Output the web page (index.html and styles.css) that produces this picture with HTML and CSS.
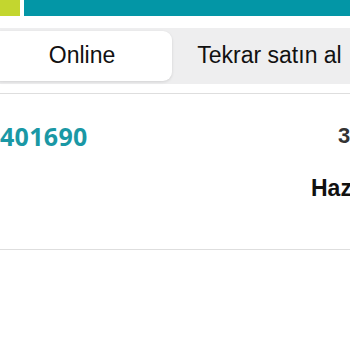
FILE: index.html
```html
<!DOCTYPE html>
<html lang="tr">
<head>
<meta charset="utf-8">
<link rel="stylesheet" href="styles.css">
</head>
<body>
<div class="topbar">
  <div class="lime"></div>
  <div class="teal"></div>
</div>
<div class="tabs">
  <div class="tab tab-active">Online</div>
  <div class="tab">Tekrar satın al</div>
</div>
<div class="divider divider-top"></div>
<div class="order">
  <div class="order-no">401690</div>
  <div class="qty">3 ürün</div>
  <div class="status">Hazırlanıyor</div>
</div>
<div class="divider"></div>
</body>
</html>
```
FILE: styles.css
```css
html, body {
  margin: 0;
  padding: 0;
  background: #ffffff;
  overflow: hidden;
  width: 350px;
  height: 350px;
}
body {
  font-family: "Liberation Sans", Arial, sans-serif;
}
.topbar {
  display: flex;
  height: 16px;
  gap: 4px;
}
.lime {
  width: 20px;
  background: #c3d62f;
}
.teal {
  flex: 1;
  background: #0396a6;
}
.tabs {
  margin-top: 12px;
  margin-left: -8px;
  width: 380px;
  height: 56px;
  box-sizing: border-box;
  padding: 3px 0 3px 0;
  background: #eeeeef;
  display: flex;
  gap: 4px;
}
.tab {
  display: flex;
  align-items: center;
  justify-content: center;
  font-size: 23px;
  color: #111111;
  width: 187px;
  flex: none;
  padding-bottom: 1px;
}
.tab-active {
  width: 180px;
  background: #ffffff;
  border-radius: 9px;
  box-shadow: 0 1px 3px rgba(0, 0, 0, 0.12);
}
.divider {
  height: 1px;
  background: #dedede;
}
.divider-top {
  margin-top: 9px;
}
.order {
  display: grid;
  grid-template-columns: 311px 200px;
  grid-template-rows: 30px 30px;
  row-gap: 22px;
  padding-top: 27px;
  height: 128px;
  box-sizing: content-box;
  padding-bottom: 0;
}
.order-no {
  font-family: "Open Sans", sans-serif;
  font-weight: 700;
  font-size: 25px;
  line-height: 30px;
  color: #1a98a5;
  letter-spacing: 0.3px;
  margin-left: 0;
  white-space: nowrap;
}
.qty {
  font-family: "Liberation Sans", Arial, sans-serif;
  font-weight: 700;
  font-size: 22px;
  line-height: 30px;
  color: #333333;
  padding-left: 27px;
  white-space: nowrap;
}
.status {
  grid-column: 2;
  grid-row: 2;
  font-family: "Liberation Sans", Arial, sans-serif;
  font-weight: 700;
  font-size: 23px;
  line-height: 30px;
  color: #111111;
  white-space: nowrap;
}
```
